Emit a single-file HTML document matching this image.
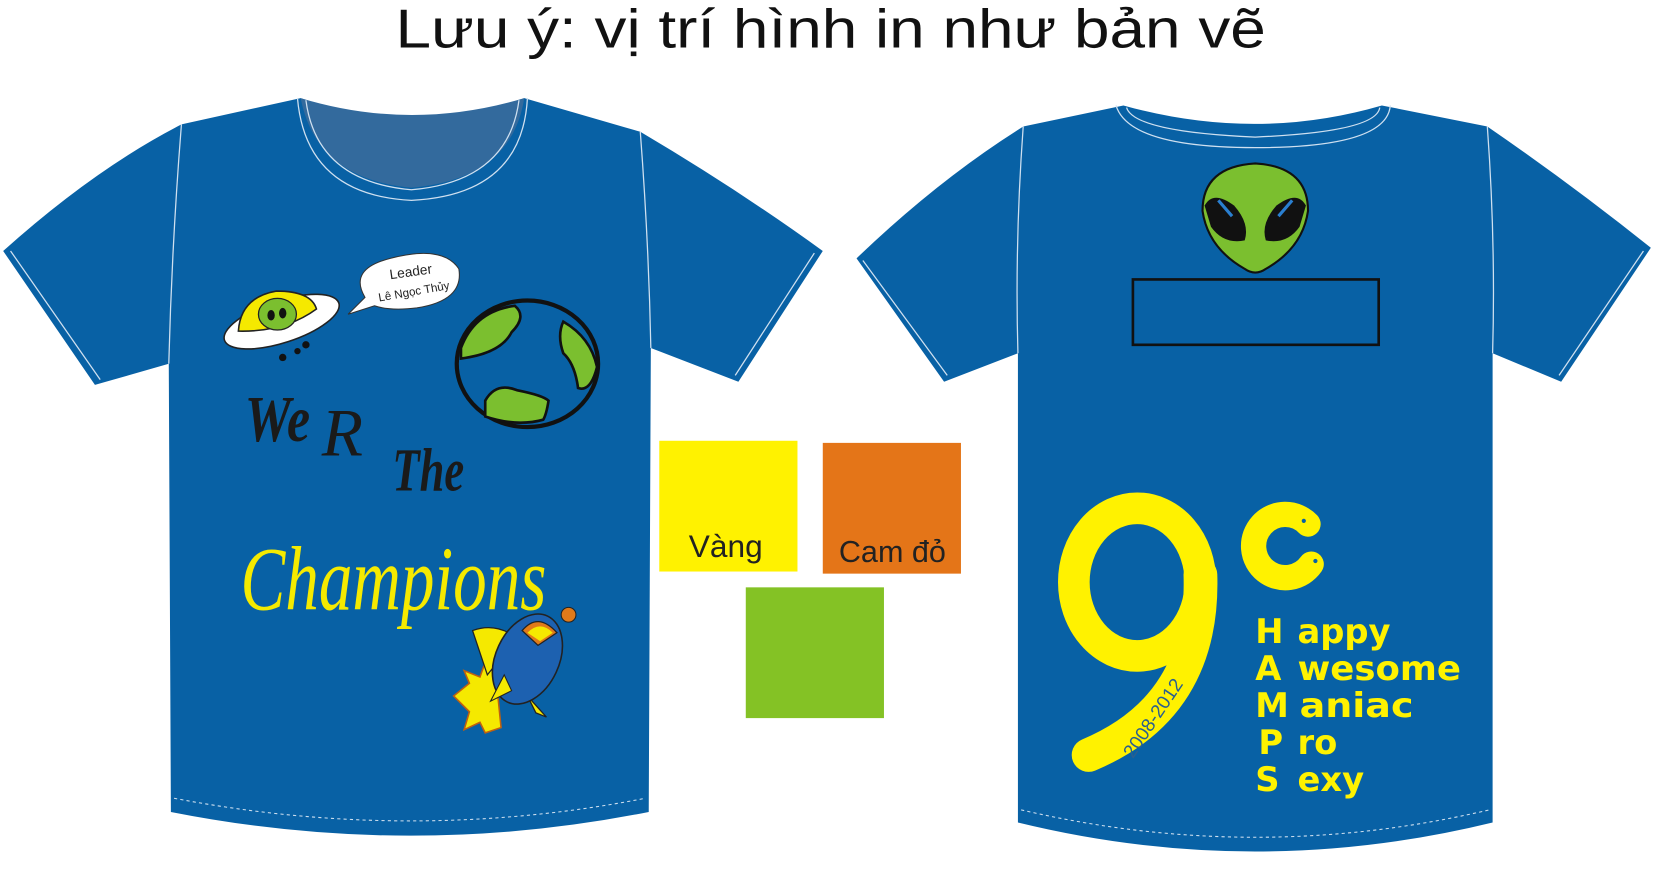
<!DOCTYPE html>
<html><head><meta charset="utf-8"><style>
html,body{margin:0;padding:0;background:#fff;width:1654px;height:871px;overflow:hidden}
svg{display:block}
</style></head><body>
<svg width="1654" height="871" viewBox="0 0 1568 826" preserveAspectRatio="none" xmlns="http://www.w3.org/2000/svg">
<rect width="1568" height="826" fill="#fff"/>
<text x="375" y="45" font-family="Liberation Sans, sans-serif" font-size="52" fill="#111" textLength="825" lengthAdjust="spacingAndGlyphs">Lưu ý: vị trí hình in như bản vẽ</text>

<!-- FRONT SHIRT -->
<path d="M285,93 Q390,130 497,93 L607,125 Q700,180 780,238 L700,362 L617,330 L615,770 Q390,815 162,770 L160,345 L90,365 L3,238 Q90,160 172,118 Z" fill="#0861a5"/>
<path d="M285,93 Q300,170 390,178 Q485,170 497,93 Q390,125 285,93Z" fill="#336a9d"/>
<path d="M290,95 Q300,172 390,180 Q482,172 492,95" fill="none" stroke="#cfe0f0" stroke-width="1.2"/>
<path d="M282,93 Q290,185 390,190 Q495,185 500,93" fill="none" stroke="#cfe0f0" stroke-width="1.2"/>
<path d="M172,118 Q163,230 160,345 M607,125 Q615,230 617,330 M10,238 L95,360 M772,240 L697,356" fill="none" stroke="#cfe0f0" stroke-width="1.2"/>
<path d="M165,757 Q390,800 612,757" fill="none" stroke="#cfe0f0" stroke-width="1" stroke-dasharray="3,3"/>

<!-- UFO -->
<ellipse cx="267" cy="305" rx="57" ry="20" fill="#fff" stroke="#222" stroke-width="1.5" transform="rotate(-18 267 305)"/>
<path d="M226,314 Q228,282 262,276 Q295,276 300,293 Q270,315 226,314Z" fill="#f5e900" stroke="#222" stroke-width="1.5"/>
<ellipse cx="263" cy="298" rx="18" ry="15" fill="#7bbf2f" stroke="#222" stroke-width="1.2"/>
<ellipse cx="257" cy="299" rx="3.5" ry="5" fill="#111"/><ellipse cx="268" cy="297" rx="3.5" ry="5" fill="#111"/>
<circle cx="268" cy="339" r="3.5" fill="#111"/><circle cx="290" cy="327" r="3.5" fill="#111"/><circle cx="282" cy="333" r="3" fill="#111"/>
<!-- bubble -->
<path d="M346,282 Q330,255 370,245 Q420,232 435,255 Q440,285 395,292 Q370,295 355,290 L330,298 Z" fill="#fff" stroke="#333" stroke-width="1"/>
<text x="390" y="262" text-anchor="middle" font-family="Liberation Sans, sans-serif" font-size="13" fill="#222" transform="rotate(-8 390 262)">Leader</text>
<text x="393" y="280" text-anchor="middle" font-family="Liberation Sans, sans-serif" font-size="11" fill="#222" transform="rotate(-10 393 280)">Lê Ngọc Thủy</text>
<!-- Earth -->
<ellipse cx="500" cy="345" rx="67" ry="60" fill="#0861a5" stroke="#111" stroke-width="4"/>
<path d="M437,330 Q450,295 488,290 Q500,300 485,315 Q475,335 437,340Z" fill="#7bbf2f" stroke="#111" stroke-width="2.5"/>
<path d="M534,305 Q560,320 566,348 Q560,372 548,368 Q545,345 534,335 Q528,318 534,305Z" fill="#7bbf2f" stroke="#111" stroke-width="2.5"/>
<path d="M460,380 Q470,362 490,370 Q515,375 520,380 Q518,393 515,398 Q490,405 460,395Z" fill="#7bbf2f" stroke="#111" stroke-width="2.5"/>
<!-- text -->
<text x="232" y="418" font-family="Liberation Serif, serif" font-style="italic" font-weight="bold" font-size="62" fill="#1a1a1a" textLength="62" lengthAdjust="spacingAndGlyphs">We</text>
<text x="305" y="432" font-family="Liberation Serif, serif" font-style="italic" font-size="64" fill="#1a1a1a">R</text>
<text x="372" y="465" font-family="Liberation Serif, serif" font-style="italic" font-weight="bold" font-size="58" fill="#1a1a1a" textLength="68" lengthAdjust="spacingAndGlyphs">The</text>
<text x="228" y="578" font-family="Liberation Serif, serif" font-style="italic" font-size="86" fill="#f5ea00" textLength="290" lengthAdjust="spacingAndGlyphs">Champions</text>
<!-- rocket -->
<path d="M430,660 L445,648 L440,636 L455,642 L460,628 L470,640 L475,690 L460,695 L455,685 L440,692 L445,675 Z" fill="#f5e900" stroke="#c06010" stroke-width="1.5"/>
<path d="M448,598 Q470,590 490,605 L462,640 Z" fill="#f5e900" stroke="#222" stroke-width="1.2"/>
<path d="M500,660 L518,680 L508,676 Z" fill="#f5e900" stroke="#222" stroke-width="1.2"/>
<ellipse cx="500" cy="625" rx="30" ry="45" fill="#1d61b0" stroke="#222" stroke-width="1.5" transform="rotate(25 500 625)"/>
<path d="M495,598 Q510,580 528,600 L510,612 Z" fill="#e07a1a" stroke="#222" stroke-width="1.2"/>
<path d="M500,600 Q512,588 524,600 L512,608Z" fill="#f5e900"/>
<circle cx="539" cy="583" r="7" fill="#e07a1a" stroke="#222" stroke-width="1"/>
<path d="M478,640 L465,665 L485,655 Z" fill="#f5e900" stroke="#222" stroke-width="1"/>

<!-- swatches -->
<rect x="625" y="418" width="131" height="124" fill="#fff200"/>
<text x="688" y="528" text-anchor="middle" font-family="Liberation Sans, sans-serif" font-size="30" fill="#222">Vàng</text>
<rect x="780" y="420" width="131" height="124" fill="#e47518"/>
<text x="846" y="533" text-anchor="middle" font-family="Liberation Sans, sans-serif" font-size="29" fill="#222">Cam đỏ</text>
<rect x="707" y="557" width="131" height="124" fill="#84c225"/>

<!-- BACK SHIRT -->
<path d="M1065,100 Q1190,135 1310,100 L1410,120 Q1490,175 1565,235 L1480,362 L1415,335 L1415,780 Q1190,835 965,780 L965,335 L895,362 L812,245 Q890,170 970,120 Z" fill="#0861a5"/>
<path d="M1068,102 Q1075,125 1190,130 Q1305,125 1308,102 M1058,100 Q1070,140 1190,140 Q1315,140 1318,100" fill="none" stroke="#cfe0f0" stroke-width="1.2"/>
<path d="M970,120 Q962,230 965,335 M1410,120 Q1418,230 1415,335 M818,247 L898,356 M1558,238 L1478,356" fill="none" stroke="#cfe0f0" stroke-width="1.2"/>
<path d="M968,768 Q1190,820 1412,768" fill="none" stroke="#cfe0f0" stroke-width="1" stroke-dasharray="3,3"/>
<!-- alien -->
<path d="M1190,155 Q1240,158 1240,200 Q1235,235 1200,255 Q1190,262 1180,255 Q1145,235 1140,200 Q1140,158 1190,155Z" fill="#7bbf2f" stroke="#111" stroke-width="2"/>
<path d="M1142,195 Q1150,180 1170,195 Q1185,212 1180,228 Q1160,232 1148,215 Z" fill="#111"/>
<path d="M1238,195 Q1230,180 1210,195 Q1195,212 1200,228 Q1220,232 1232,215 Z" fill="#111"/>
<path d="M1155,190 L1168,205 M1225,190 L1212,205" stroke="#2a7fd0" stroke-width="3"/>
<rect x="1074" y="265" width="233" height="62" fill="none" stroke="#111" stroke-width="2.5"/>
<!-- 9c -->
<ellipse cx="1078" cy="552" rx="60" ry="70" fill="none" stroke="#fff200" stroke-width="30"/>
<path d="M1138,545 Q1142,670 1032,716" fill="none" stroke="#fff200" stroke-width="32" stroke-linecap="round"/>
<text x="1074" y="720" font-family="Liberation Sans, sans-serif" font-size="18" fill="#2a5f8f" transform="rotate(-56 1074 720)">2008-2012</text>
<path d="M1240,497 A30,30 0 1 0 1243,535" fill="none" stroke="#fff200" stroke-width="24" stroke-linecap="round"/>
<circle cx="1236" cy="494" r="2" fill="#0861a5"/><circle cx="1247" cy="532" r="2" fill="#0861a5"/>
<g font-family="DejaVu Sans, sans-serif" font-weight="bold" font-size="32" fill="#fff200">
<text x="1190" y="610">H</text><text x="1230" y="610">appy</text>
<text x="1190" y="645">A</text><text x="1230" y="645" textLength="155" lengthAdjust="spacingAndGlyphs">wesome</text>
<text x="1190" y="680">M</text><text x="1232" y="680" textLength="108" lengthAdjust="spacingAndGlyphs">aniac</text>
<text x="1193" y="715">P</text><text x="1230" y="715">ro</text>
<text x="1190" y="750">S</text><text x="1230" y="750">exy</text>
</g>
</svg>
</body></html>
